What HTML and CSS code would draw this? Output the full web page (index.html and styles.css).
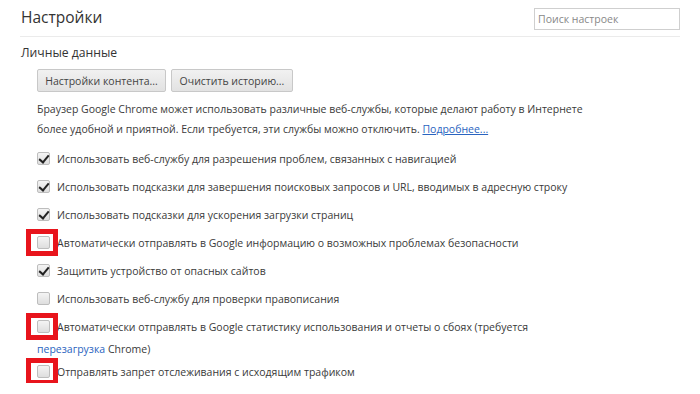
FILE: index.html
```html
<!DOCTYPE html>
<html lang="ru">
<head>
<meta charset="utf-8">
<title>Настройки</title>
<link rel="stylesheet" href="styles.css">
</head>
<body>
<div class="page">
  <header class="header">
    <h1 class="title">Настройки</h1>
    <input class="search" type="text" placeholder="Поиск настроек">
  </header>
  <section class="section">
    <h2 class="section-title">Личные данные</h2>
    <div class="content">
      <div class="buttons">
        <button class="btn">Настройки контента...</button>
        <button class="btn">Очистить историю...</button>
      </div>
      <p class="desc">Браузер Google Chrome может использовать различные веб-службы, которые делают работу в Интернете<br>более удобной и приятной. Если требуется, эти службы можно отключить. <a class="link" href="#">Подробнее...</a></p>
      <div class="row"><span class="cb checked"></span>Использовать веб-службу для разрешения проблем, связанных с навигацией</div>
      <div class="row"><span class="cb checked"></span>Использовать подсказки для завершения поисковых запросов и URL, вводимых в адресную строку</div>
      <div class="row"><span class="cb checked"></span>Использовать подсказки для ускорения загрузки страниц</div>
      <div class="row"><span class="cb mark"></span>Автоматически отправлять в Google информацию о возможных проблемах безопасности</div>
      <div class="row"><span class="cb checked"></span>Защитить устройство от опасных сайтов</div>
      <div class="row"><span class="cb"></span>Использовать веб-службу для проверки правописания</div>
      <div class="row"><span class="cb mark"></span>Автоматически отправлять в Google статистику использования и отчеты о сбоях (требуется<br><span class="link-plain">перезагрузка</span> Chrome)</div>
      <div class="row tight"><span class="cb mark"></span>Отправлять запрет отслеживания с исходящим трафиком</div>
    </div>
  </section>
</div>
</body>
</html>
```
FILE: styles.css
```css
html, body {
  margin: 0;
  padding: 0;
  background: #fff;
}
body {
  font-family: "Open Sans", "Noto Sans", sans-serif;
  color: #3a3a3a;
}
.page {
  padding: 0 20px;
}
.header {
  display: flex;
  align-items: center;
  justify-content: space-between;
  height: 36px;
  border-bottom: 1px solid #ebebeb;
}
.title {
  margin: 0 0 2px 1px;
  font-size: 15.5px;
  font-weight: 400;
  color: #333;
}
.search {
  box-sizing: border-box;
  width: 146px;
  height: 22px;
  margin-top: 2px;
  border: 1px solid #cfcfcf;
  padding: 0 3px;
  font-family: "Open Sans", sans-serif;
  font-size: 10.5px;
  color: #444;
  outline: none;
}
.search::placeholder {
  color: #888;
}
.section-title {
  margin: 7px 0 0 1px;
  font-size: 12.2px;
  font-weight: 400;
  color: #333;
  line-height: 18px;
}
.content {
  padding-left: 17px;
  font-size: 10.5px;
}
.buttons {
  display: flex;
  gap: 5px;
  margin-top: 7px;
}
.btn {
  box-sizing: border-box;
  height: 23px;
  padding: 0 4px;
  white-space: nowrap;
  border: 1px solid #c8c8c8;
  border-radius: 2px;
  background: linear-gradient(#f1f1f1, #e2e2e2);
  font-family: "Open Sans", sans-serif;
  font-size: 10.5px;
  color: #444;
}
.btn:first-child { width: 129px; }
.btn:last-child { width: 122px; }
.desc {
  margin: 7px 0 0;
  line-height: 20px;
}
.link {
  color: #2a64c0;
  text-decoration: underline;
}
.link-plain {
  color: #2a64c0;
}
.row {
  margin-top: 6px;
  line-height: 22px;
}
.desc + .row {
  margin-top: 9px;
}
.row.tight {
  margin-top: 1px;
}
.cb {
  position: relative;
  display: inline-block;
  box-sizing: border-box;
  width: 13px;
  height: 13px;
  margin-right: 7px;
  vertical-align: -2px;
  border: 1px solid #bdbdbd;
  border-radius: 2px;
  background: linear-gradient(#f4f4f4, #dedede);
}
.cb.checked::after {
  content: "";
  position: absolute;
  left: 3px;
  top: 0px;
  width: 4px;
  height: 8px;
  border-right: 2px solid #222;
  border-bottom: 2px solid #222;
  transform: rotate(40deg);
}
.cb.mark::before {
  content: "";
  position: absolute;
  left: -12px;
  top: -8px;
  right: -9px;
  bottom: -8px;
  border: 5px solid #e8141c;
}
```
